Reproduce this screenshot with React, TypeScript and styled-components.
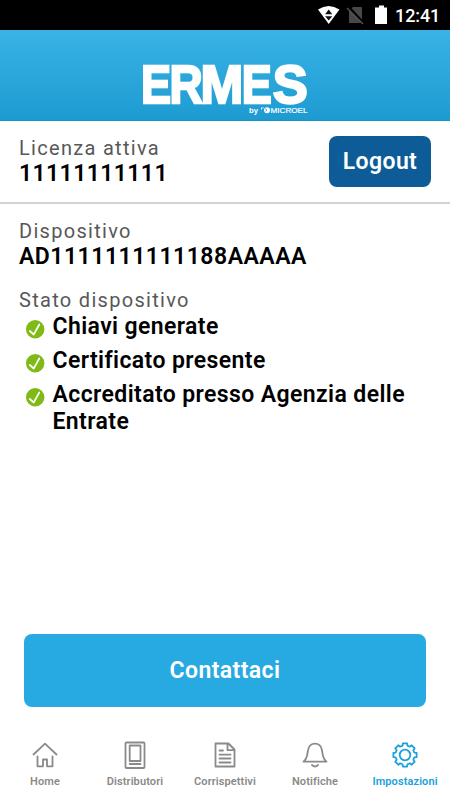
import React from "react";
import styled, { createGlobalStyle } from "styled-components";

const GlobalStyle = createGlobalStyle`
  * { box-sizing: border-box; }
  body { margin: 0; background: #fff; font-family: Roboto, sans-serif; }
  svg { display: block; overflow: visible; }
`;

const Screen = styled.div`
  width: 450px;
  height: 800px;
  display: flex;
  flex-direction: column;
  overflow: hidden;
  background: #fff;
  color: #000;
`;

const StatusBar = styled.div`
  height: 30px;
  flex: none;
  display: flex;
  justify-content: flex-end;
  padding-right: 10px;
  background: #000;
  color: #fff;
`;

const Clock = styled.span`
  width: 45px;
  font-size: 18px;
  font-weight: 500;
  line-height: 32px;
  letter-spacing: -0.1px;
  white-space: nowrap;
`;

const Header = styled.header`
  height: 91px;
  flex: none;
  display: flex;
  justify-content: center;
  background: linear-gradient(#3ab3e6, #1d9bd1);
  border-bottom: 1px solid #1591cb;
`;

const LicenseRow = styled.section`
  height: 83px;
  flex: none;
  display: flex;
  justify-content: space-between;
  padding: 15px 19px 0;
  border-bottom: 2px solid #d3d3d3;
`;

const Label = styled.div`
  height: 25px;
  font-size: 20px;
  line-height: 25px;
  letter-spacing: 1.3px;
  font-weight: 400;
  color: #585858;
`;

const Value = styled.div<{ $spacing: number }>`
  font-size: 23px;
  line-height: 26px;
  font-weight: 650;
  letter-spacing: ${(p) => p.$spacing}px;
  white-space: nowrap;
`;

const Button = styled.button<{ $primary?: boolean }>`
  display: flex;
  align-items: center;
  justify-content: center;
  flex: none;
  padding: 0 0 1px;
  border: 0;
  border-radius: 8px;
  font-family: inherit;
  font-size: 23px;
  font-weight: 650;
  letter-spacing: 0.4px;
  color: #fff;
  width: ${(p) => (p.$primary ? "402px" : "102px")};
  height: ${(p) => (p.$primary ? "73px" : "51px")};
  background: ${(p) => (p.$primary ? "#27aae1" : "#0d5c97")};
`;

const Details = styled.main`
  flex: 1;
  padding: 15px 19px 0;
`;

const Status = styled.div`
  margin-top: 18px;
`;

const CheckList = styled.ul`
  list-style: none;
  margin: 0;
  padding: 0 0 0 7px;
  display: flex;
  flex-direction: column;
  gap: 7px;
`;

const CheckItem = styled.li`
  display: flex;
  gap: 7.5px;
  width: 390px;
  font-size: 23px;
  line-height: 27px;
  font-weight: 600;
  letter-spacing: 0.4px;

  svg { flex: none; margin-top: 6.5px; }
`;

const Action = styled.div`
  height: 73px;
  flex: none;
  display: flex;
  justify-content: center;
`;

const TabBar = styled.nav`
  height: 93px;
  flex: none;
  display: grid;
  grid-template-columns: repeat(5, 90px);
  padding-top: 34px;
`;

const Tab = styled.a<{ $active?: boolean }>`
  display: flex;
  flex-direction: column;
  align-items: center;
  font-size: 11px;
  line-height: 16px;
  font-weight: 600;
  letter-spacing: 0.1px;
  color: ${(p) => (p.$active ? "#1ba1dc" : "#8a8a8a")};

  svg {
    width: 28px;
    height: 28px;
    margin-bottom: 5px;
    fill: none;
    stroke: currentColor;
    stroke-width: 1.8;
    stroke-linecap: round;
    stroke-linejoin: round;
  }
`;

const StatusIcons = () => (
  <svg width="78" height="30" viewBox="317 0 78 30">
    <path d="M318 9.5Q328.500 2.500 339.500 9.500L328.700 24Z" fill="#fff" />
    <path d="M328.700 9.500L332.300 14.200H325.100ZM325.100 16.200H332.300L328.700 20.500Z" fill="#111" />
    <path d="M353 7H361Q362 7 362 8V23H349V11Z" fill="#484848" />
    <path d="M348 6.500L364 24" stroke="#000" strokeWidth="3" />
    <path d="M347 8L363 24" stroke="#555" strokeWidth="1.4" />
    <path d="M379 5.500H384V7.500H387V24H375V7.500H379Z" fill="#fff" />
  </svg>
);

const logoLetters = [
  { char: "E", x: 141.1, stretch: 0.85 },
  { char: "R", x: 169.6, stretch: 0.87 },
  { char: "M", x: 200.5, stretch: 0.97 },
  { char: "E", x: 241.8, stretch: 0.85 },
  { char: "S", x: 272.8, stretch: 0.99 },
];

const Logo = () => (
  <svg width="180" height="90" viewBox="135 30 180 90" fill="#fff" fontFamily="'Liberation Sans', sans-serif" fontWeight="700">
    <g fontSize="53" stroke="#fff" strokeWidth="2.300">
      {logoLetters.map(({ char, x, stretch }) => (
        <text key={x} transform={`translate(${x} 102.9) scale(${stretch} 1)`}>
          {char}
        </text>
      ))}
    </g>
    <text x="249" y="112.500" fontSize="7.500" textLength="9" lengthAdjust="spacingAndGlyphs">by</text>
    <circle cx="267" cy="110.300" r="3" />
    <path d="M265 108.700L267 110L265.300 111.600" fill="none" stroke="#229fd5" strokeWidth="0.800" />
    <path d="M261.500 107.500V109.500M263 107.300V108.500" stroke="#fff" />
    <text x="270.500" y="113.300" fontSize="8" fontWeight="400" textLength="37" lengthAdjust="spacingAndGlyphs" stroke="#fff" strokeWidth="0.2">MICROEL</text>
  </svg>
);

const Check = () => (
  <svg width="19" height="19" viewBox="0 0 19 19">
    <circle cx="9.200" cy="9.200" r="9.200" fill="#7fba16" />
    <path d="M3.800 11L7.700 14.500L13.300 4.500" fill="none" stroke="#fff" strokeWidth="1.700" strokeLinecap="round" strokeLinejoin="round" />
  </svg>
);

// Outline of an eight-toothed cog centred in a 28px box.
const cogPath = Array.from({ length: 8 }, (_, i) =>
  [
    [-15, 9.6],
    [-10.5, 11.8],
    [10.5, 11.8],
    [15, 9.6],
  ]
    .map(([offset, radius]) => {
      const angle = ((i * 45 + offset) * Math.PI) / 180;
      return `${(14 + radius * Math.cos(angle)).toFixed(2)} ${(14 + radius * Math.sin(angle)).toFixed(2)}`;
    })
    .join("L")
).join("L");

const tabs = [
  {
    name: "Home",
    icon: <path d="M2.500 13.500L14 2.700L25.500 13.500M6.500 15.300V25.300H12V18.500H16V25.300H21.500V15.300" />,
  },
  {
    name: "Distributori",
    icon: (
      <>
        <rect x="4.500" y="1.500" width="19" height="25.500" rx="1" />
        <rect x="8.700" y="4.500" width="10.800" height="15.500" />
        <path d="M8.700 23H19.500" />
      </>
    ),
  },
  {
    name: "Corrispettivi",
    icon: (
      <>
        <path d="M5 2.500H17.500L23.500 8.500V25.500H4.500V2.500M16.500 3V9.200H23" />
        <path d="M8.500 9.500H12M8.500 13.700H19.500M8.500 17.500H19.500M8.500 21.500H19.500" />
      </>
    ),
  },
  {
    name: "Notifiche",
    icon: (
      <>
        <path d="M2.500 20.700C7 17 6 13 7.200 8.500C8 4.800 10.500 2.700 14 2.700S20 4.800 20.800 8.500C22 13 21 17 25.500 20.700Z" />
        <path d="M11 24Q14 27 17 24" />
      </>
    ),
  },
  {
    name: "Impostazioni",
    active: true,
    icon: (
      <>
        <path d={`M${cogPath}Z`} />
        <circle cx="14" cy="14" r="5.300" />
      </>
    ),
  },
];

const checks = ["Chiavi generate", "Certificato presente", "Accreditato presso Agenzia delle Entrate"];

export default function App() {
  return (
    <Screen>
      <GlobalStyle />
      <StatusBar>
        <StatusIcons />
        <Clock>12:41</Clock>
      </StatusBar>
      <Header>
        <Logo />
      </Header>
      <LicenseRow>
        <div>
          <Label>Licenza attiva</Label>
          <Value $spacing={0.4}>11111111111</Value>
        </div>
        <Button>Logout</Button>
      </LicenseRow>
      <Details>
        <Label>Dispositivo</Label>
        <Value $spacing={0.5}>AD1111111111188AAAAA</Value>
        <Status>
          <Label>Stato dispositivo</Label>
          <CheckList>
            {checks.map((text) => (
              <CheckItem key={text}>
                <Check />
                <span>{text}</span>
              </CheckItem>
            ))}
          </CheckList>
        </Status>
      </Details>
      <Action>
        <Button $primary>Contattaci</Button>
      </Action>
      <TabBar>
        {tabs.map((tab) => (
          <Tab key={tab.name} $active={tab.active}>
            <svg viewBox="0 0 28 28">{tab.icon}</svg>
            {tab.name}
          </Tab>
        ))}
      </TabBar>
    </Screen>
  );
}
